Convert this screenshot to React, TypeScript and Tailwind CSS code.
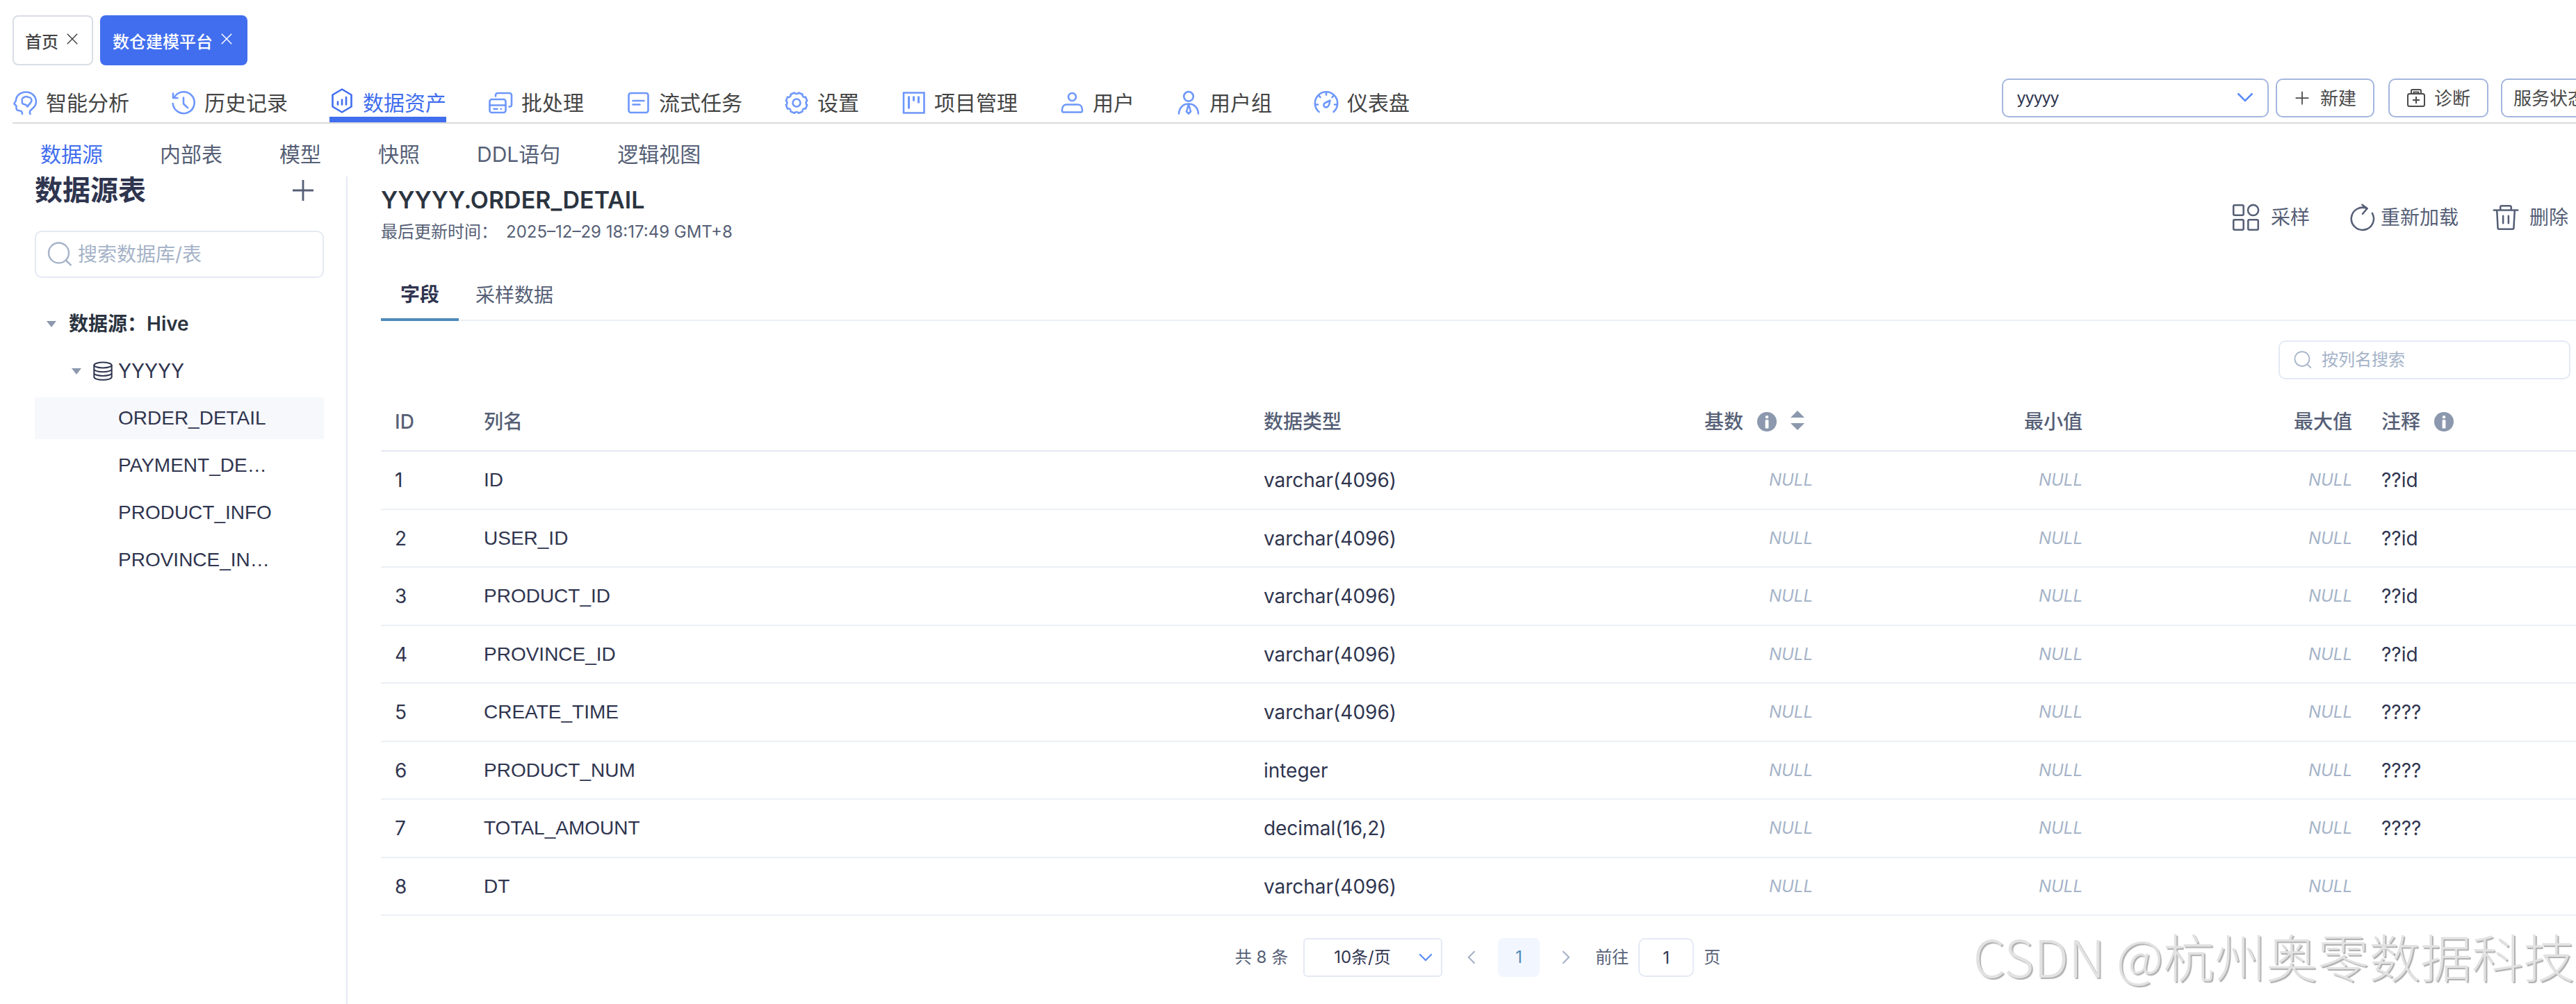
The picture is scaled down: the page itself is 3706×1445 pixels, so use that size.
import React, { useState } from "react";

type IconProps = { className?: string };

function Svg({ className = "", children }: React.PropsWithChildren<IconProps>) {
  return (
    <svg
      viewBox="0 0 36 36"
      fill="none"
      stroke="currentColor"
      strokeWidth="2.6"
      strokeLinecap="round"
      strokeLinejoin="round"
      aria-hidden="true"
      className={`shrink-0 ${className}`}
    >
      {children}
    </svg>
  );
}

const HeadIcon = () => (
  <Svg className="size-9">
    <path d="M14 34c0-3-1.500-4.800-4-4.800-3.500 0-4.500-1-4.500-4v-2.700L2.500 19.500c-.5-1.500 2.500-3 2.500-5.500C5.500 7.500 11.500 2.500 19.500 2.500 27.500 2.500 34 8.500 34 16.500c0 5-2.500 7.500-5.500 10-3 2.500-5 4-3 7.500" />
    <path d="M21.500 23.500c-1-2.500-2.500-3-4.500-3.300-3-.5-3.500-2-3-4 -1-2.500 0-5.200 2.500-6.200 2.500-1.500 5-1 6.500 0 2.500 0 4.500 2 4.500 4.500 0 3.500-3 4-6 9z" />
  </Svg>
);

const HistoryIcon = () => (
  <Svg className="size-9">
    <path d="M5 9.500A15.500 15.500 0 1 1 2.700 19" />
    <path d="M3 4.500v6.500h6.500" />
    <path d="M18 10.500v9l6 5.500" />
  </Svg>
);

const AssetIcon = () => (
  <Svg className="size-9">
    <path d="M18 1.500 31.500 9.500v17L18 34.500 4.500 26.500v-17z" />
    <path d="M12 19.500v4M18 16.500v7M24 13v10.500" />
  </Svg>
);

const BatchIcon = () => (
  <Svg className="size-9">
    <rect x="2.500" y="13" width="23" height="19" rx="3" />
    <path d="M2.500 21.500h23M8.500 26.700h5M18.800 26.700h.2M11 8.500V7a3 3 0 0 1 3-3h17a3 3 0 0 1 3 3v14a2.500 2.500 0 0 1-2.500 2.500h-1" />
  </Svg>
);

const TaskIcon = () => (
  <Svg className="size-9">
    <rect x="4.500" y="4" width="28" height="28" rx="3" />
    <path d="M10.500 15h16M10.500 20.500h10" />
  </Svg>
);

const GearIcon = () => (
  <Svg className="size-9">
    <path d="M15 3.500c.8 2 5.200 2 6 0l5.500 2.200c-.8 2.600 1.800 5 4.500 4l2.200 5.300c-2.200 1-2.200 5 0 6L31 26.500c-2.700-1-5.300 1.400-4.500 4L21 32.700c-.8-2-5.200-2-6 0l-5.500-2.200c.8-2.600-1.800-5-4.500-4L2.800 21c2.200-1 2.200-5 0-6L5 9.700c2.700 1 5.300-1.400 4.500-4z" />
    <circle cx="18" cy="18" r="5.500" />
  </Svg>
);

const BoardIcon = () => (
  <Svg className="size-9">
    <path strokeLinejoin="miter" d="M4 3.500h29.500v29H4z" />
    <path strokeWidth="3" strokeLinecap="butt" d="M11.500 8.500v18M18.500 8.500v7M25.500 8.500v10" />
  </Svg>
);

const UserIcon = () => (
  <Svg className="size-9">
    <circle cx="18.500" cy="9.500" r="5.500" />
    <path d="M4 29c0-5 2.500-8.500 6-8.500h17c3.500 0 6 3.500 6 8.500 0 2-.5 2.500-2 2.500H6c-1.500 0-2-.5-2-2.500z" />
  </Svg>
);

const GroupIcon = () => (
  <Svg className="size-9">
    <circle cx="18" cy="8.800" r="6.800" />
    <path d="M4 33.500C4.500 25 10 19.500 18 19.500S31.500 25 32 33.500M18 20l-3 10.500 3 3.200 3-3.200z" />
  </Svg>
);

const GaugeIcon = () => (
  <Svg className="size-9">
    <path d="M7.500 31C4 28 1.800 24 1.800 18.500a16.200 16.200 0 0 1 32.400 0c0 5.500-2.200 9.500-5.700 12.500" />
    <path d="M18 3v3.500M7.500 7.800l2 2.200M28.500 7.800l-2 2.200M2.500 20.500h3.500M33.500 20.500H30" />
    <path d="M23.500 14.500 22.300 20c-1 3.500-4 5.200-6.500 4-2-1.500-2-4.500.7-6z" />
  </Svg>
);

const CloseIcon = () => (
  <svg viewBox="0 0 16 16" className="size-4 shrink-0" stroke="currentColor" strokeWidth="1.500" aria-hidden="true">
    <path d="M.8.8l14.400 14.400M15.200.8.8 15.200" />
  </svg>
);

const PlusIcon = ({ className = "" }: IconProps) => (
  <svg viewBox="0 0 32 32" className={`shrink-0 ${className}`} stroke="currentColor" strokeWidth="2.800" aria-hidden="true">
    <path d="M16 1v30M1 16h30" />
  </svg>
);

const KitIcon = () => (
  <svg viewBox="0 0 28 28" className="size-7 shrink-0" fill="none" stroke="currentColor" strokeWidth="2" strokeLinejoin="round" aria-hidden="true">
    <rect x="2" y="8" width="24" height="18" rx="2.500" />
    <path d="M7 8V3.500A1.500 1.500 0 0 1 8.500 2h11A1.500 1.500 0 0 1 21 3.500V8M10.500 8V5.500h7V8M14 12v10M9 17h10" />
  </svg>
);

const SearchIcon = ({ className = "" }: IconProps) => (
  <svg viewBox="0 0 36 36" className={`shrink-0 ${className}`} fill="none" stroke="currentColor" strokeWidth="2.400" aria-hidden="true">
    <circle cx="16.500" cy="16" r="14.500" />
    <path d="M26.500 26.500l8 7.500" />
  </svg>
);

const ChevronIcon = ({ className = "" }: IconProps) => (
  <svg viewBox="0 0 24 14" fill="none" stroke="currentColor" strokeWidth="2.600" aria-hidden="true" className={`pointer-events-none shrink-0 ${className}`}>
    <path d="M1.500 1.500 12 12 22.500 1.500" />
  </svg>
);

const SampleIcon = () => (
  <Svg className="size-10">
    <rect x="2" y="2" width="13" height="13" rx="1.500" strokeWidth="2.300" />
    <circle cx="27.500" cy="8.500" r="6.800" strokeWidth="2.300" />
    <rect x="2" y="21" width="13" height="13" rx="1.500" strokeWidth="2.300" />
    <rect x="21" y="21" width="13" height="13" rx="1.500" strokeWidth="2.300" />
  </Svg>
);

const ReloadIcon = () => (
  <Svg className="size-10">
    <path strokeWidth="2.300" d="M30.500 12.500A14.500 14.500 0 1 1 24 6.500M17.500 1.500l6.500 4.800-6 7" />
  </Svg>
);

const TrashIcon = () => (
  <Svg className="size-10">
    <path strokeWidth="2.300" d="M2.500 8.500h31M11 8.500v-4A1.500 1.500 0 0 1 12.500 3h11A1.500 1.500 0 0 1 25 4.500v4M6.500 8.500l1.200 23A1.500 1.500 0 0 0 9.200 33h17.600a1.500 1.500 0 0 0 1.500-1.500l1.200-23M14.500 16v9.500M21.500 16v9.500" />
  </Svg>
);

const DatabaseIcon = () => (
  <svg viewBox="0 0 28 28" className="size-7 shrink-0" fill="none" stroke="currentColor" strokeWidth="2" aria-hidden="true">
    <ellipse cx="14" cy="5.500" rx="12.700" ry="4" />
    <path d="M1.300 5.500v17c0 2.500 5.700 4.300 12.700 4.300s12.700-1.800 12.700-4.300v-17M1.300 11.300c0 2.200 5.700 4 12.700 4s12.700-1.800 12.700-4M1.300 17c0 2.200 5.700 4 12.700 4s12.700-1.800 12.700-4" />
  </svg>
);

const CaretIcon = () => (
  <svg viewBox="0 0 14 9" className="w-3.5 shrink-0 text-[#8b98ad]" fill="currentColor" aria-hidden="true">
    <path d="M0 0h14L7 9z" />
  </svg>
);

const InfoIcon = () => (
  <svg viewBox="0 0 28 28" className="size-7 shrink-0" aria-hidden="true">
    <circle cx="14" cy="14" r="14" fill="#8b98ad" />
    <circle cx="14" cy="7.300" r="2.200" fill="#fff" />
    <rect x="11.600" y="11.300" width="4.800" height="12.300" rx=".6" fill="#fff" />
  </svg>
);

const SortIcon = () => (
  <svg viewBox="0 0 20 28" className="h-7 w-5 shrink-0" fill="#8b98ad" aria-hidden="true">
    <path d="M0 10 10 0l10 10zM0 18h20L10 28z" />
  </svg>
);

const navItems = [
  { label: "智能分析", Icon: HeadIcon },
  { label: "历史记录", Icon: HistoryIcon },
  { label: "数据资产", Icon: AssetIcon, active: true },
  { label: "批处理", Icon: BatchIcon },
  { label: "流式任务", Icon: TaskIcon },
  { label: "设置", Icon: GearIcon },
  { label: "项目管理", Icon: BoardIcon },
  { label: "用户", Icon: UserIcon },
  { label: "用户组", Icon: GroupIcon },
  { label: "仪表盘", Icon: GaugeIcon },
];

const subItems = ["数据源", "内部表", "模型", "快照", "DDL语句", "逻辑视图"];

const tables = ["ORDER_DETAIL", "PAYMENT_DE…", "PRODUCT_INFO", "PROVINCE_IN…"];

const columns = [
  { name: "ID", type: "varchar(4096)", note: "??id" },
  { name: "USER_ID", type: "varchar(4096)", note: "??id" },
  { name: "PRODUCT_ID", type: "varchar(4096)", note: "??id" },
  { name: "PROVINCE_ID", type: "varchar(4096)", note: "??id" },
  { name: "CREATE_TIME", type: "varchar(4096)", note: "????" },
  { name: "PRODUCT_NUM", type: "integer", note: "????" },
  { name: "TOTAL_AMOUNT", type: "decimal(16,2)", note: "????" },
  { name: "DT", type: "varchar(4096)", note: "" },
];

const outlineButton =
  "flex h-14 shrink-0 items-center rounded-[10px] border-2 border-[#a3b6de] bg-white text-[26px] text-[#4a4a4a]";

function TopTabs() {
  return (
    <div className="flex gap-2.5 pt-[22px] pl-[18px] text-[24px] leading-8">
      <div className="flex h-[72px] items-center gap-3 rounded-lg border-2 border-[#d9dde6] px-4 font-medium text-[#444]">
        <a href="#home" className="pt-1.5">首页</a>
        <button type="button" aria-label="关闭首页" className="mb-1 mr-1"><CloseIcon /></button>
      </div>
      <div className="flex h-[72px] items-center gap-3 rounded-lg bg-[#416eee] px-[18px] font-medium text-white">
        <a href="#platform" className="pt-1.5">数仓建模平台</a>
        <button type="button" aria-label="关闭数仓建模平台" className="mb-1 mr-1"><CloseIcon /></button>
      </div>
    </div>
  );
}

function MainNav() {
  return (
    <header className="ml-[18px] flex h-[84px] items-end border-b-2 border-[#d9dadb]">
      <nav className="flex shrink-0 gap-[60px]">
        {navItems.map(({ label, Icon, active }) => (
          <a
            key={label}
            href="#nav"
            aria-current={active ? "page" : undefined}
            className={
              active
                ? "flex h-12 items-center gap-3 border-b-8 border-[#416eee] text-[30px] leading-10 text-[#416eee]"
                : "flex h-12 items-center gap-3 border-b-8 border-transparent text-[30px] leading-10 text-[#444]"
            }
          >
            <span className={active ? "-mt-1.5 text-[#416eee]" : "text-[#6d97fa]"}><Icon /></span>
            {label}
          </a>
        ))}
      </nav>
      <div className="mb-[7px] -mr-8 ml-auto flex shrink-0 items-center">
        <div className="relative mr-2.5 w-96">
          <select
            aria-label="项目"
            defaultValue="yyyyy"
            className="h-14 w-full appearance-none rounded-[10px] border-2 border-[#a3b6de] bg-white pl-5 font-['Liberation_Sans','Noto_Sans_CJK_SC',sans-serif] text-[24px] text-[#2f354f]"
          >
            <option>yyyyy</option>
          </select>
          <ChevronIcon className="absolute top-5 right-[22px] w-6 text-[#5b8bf8]" />
        </div>
        <button type="button" className={`${outlineButton} mr-5 gap-4 pr-6 pl-[26px]`}>
          <PlusIcon className="size-5" />新建
        </button>
        <button type="button" className={`${outlineButton} mr-[18px] gap-3 px-6`}>
          <KitIcon />诊断
        </button>
        <button type="button" className={`${outlineButton} px-4`}>服务状态</button>
      </div>
    </header>
  );
}

function Sidebar() {
  return (
    <aside className="w-[500px] shrink-0 border-r-2 border-[#e4e9f2] pr-8 pl-[50px]">
      <div className="flex h-10 items-center justify-between pr-3.5">
        <h2 className="text-[40px] leading-10 font-bold text-[#2f354f]">数据源表</h2>
        <button type="button" aria-label="新增数据源" className="text-[#565f76]"><PlusIcon className="size-8" /></button>
      </div>
      <label className="mt-[38px] flex h-[68px] items-center gap-2 rounded-[10px] border-2 border-[#e4e9f2] pl-4 text-[#a5b3c8]">
        <SearchIcon className="size-9" />
        <input
          type="search"
          aria-label="搜索数据库/表"
          placeholder="搜索数据库/表"
          className="min-w-0 flex-1 bg-transparent text-[28px] leading-10 text-[#2f354f] outline-none placeholder:text-[#a5b3c8]"
        />
      </label>
      <ul className="mt-9 flex flex-col gap-2 text-[28px] leading-10 text-[#2f354f]">
        <li className="flex h-[60px] items-center gap-[18px] pl-[17px] font-semibold text-[#2b3440]">
          <CaretIcon />数据源：Hive
        </li>
        <li className="flex h-[60px] items-center pl-[53px]">
          <CaretIcon />
          <span className="mr-2 ml-[17px]"><DatabaseIcon /></span>
          YYYYY
        </li>
        {tables.map((name, index) => (
          <li key={name} className="font-['Liberation_Sans','Noto_Sans_CJK_SC',sans-serif]">
            <a
              href="#table"
              className={
                index === 0
                  ? "flex h-[60px] items-center bg-[#f7f8fb] pl-[120px]"
                  : "flex h-[60px] items-center pl-[120px]"
              }
            >
              {name}
            </a>
          </li>
        ))}
      </ul>
    </aside>
  );
}

function ColumnTable() {
  return (
    <table className="mt-5 w-full table-fixed border-collapse text-left text-[28px] leading-10 text-[#2f354f]">
      <colgroup>
        <col className="w-32" />
        <col />
        <col className="w-[14%]" />
        <col className="w-[388px]" />
        <col className="w-[388px]" />
        <col className="w-[388px]" />
        <col className="w-[302px]" />
      </colgroup>
      <thead className="text-[#565f76]">
        <tr className="h-[83px] border-b-2 border-[#e4e9f2]">
          <th className="px-5 font-medium">ID</th>
          <th className="px-5 font-medium">列名</th>
          <th className="px-5 font-medium">数据类型</th>
          <th className="px-5 font-medium">
            <span className="flex items-center justify-end gap-5 pr-3">
              基数
              <InfoIcon />
              <button type="button" aria-label="按基数排序" className="mb-1"><SortIcon /></button>
            </span>
          </th>
          <th className="px-5 text-right font-medium">最小值</th>
          <th className="px-5 text-right font-medium">最大值</th>
          <th className="px-[22px] font-medium">
            <span className="flex items-center gap-5">注释<InfoIcon /></span>
          </th>
        </tr>
      </thead>
      <tbody>
        {columns.map((column, index) => (
          <tr key={column.name} className="border-b-2 border-[#ebf0f6] odd:h-[84px] even:h-[83px]">
            <td className="px-5">{index + 1}</td>
            <td className="px-5 font-['Liberation_Sans','Noto_Sans_CJK_SC',sans-serif]">{column.name}</td>
            <td className="px-5">{column.type}</td>
            <td className="px-5 text-right text-[24px] text-[#a5b3c8] italic">NULL</td>
            <td className="px-5 text-right text-[24px] text-[#a5b3c8] italic">NULL</td>
            <td className="px-5 text-right text-[24px] text-[#a5b3c8] italic">NULL</td>
            <td className="px-[22px]">{column.note}</td>
          </tr>
        ))}
      </tbody>
    </table>
  );
}

function Pagination() {
  const [page, setPage] = useState("1");
  return (
    <div className="mt-8 flex items-center justify-center pr-0.5 text-[24px] leading-8 text-[#565f76]">
      <span className="mr-[22px]">共 8 条</span>
      <div className="relative mr-8 w-[200px]">
        <select
          aria-label="每页条数"
          className="h-14 w-full appearance-none rounded-md border-2 border-[#e4e9f4] bg-white pl-[42px] text-[24px] text-[#2f354f]"
        >
          <option>10条/页</option>
        </select>
        <ChevronIcon className="absolute top-[22px] right-3.5 w-5 text-[#5b8bf8]" />
      </div>
      <button type="button" aria-label="上一页" className="mr-7 text-[#a5b3c8]">
        <ChevronIcon className="w-5 rotate-90" />
      </button>
      <button type="button" aria-current="page" className="mr-7 h-14 w-[60px] rounded-lg bg-[#f2f6fe] text-[#4f8ab9]">1</button>
      <button type="button" aria-label="下一页" className="mr-8 text-[#a5b3c8]">
        <ChevronIcon className="w-5 -rotate-90" />
      </button>
      <label className="flex items-center gap-3.5">
        前往
        <input
          value={page}
          onChange={(event) => setPage(event.target.value)}
          className="h-14 w-20 rounded-[10px] border-2 border-[#e4e9f4] text-center text-[#2f354f]"
        />
        页
      </label>
    </div>
  );
}

function Detail() {
  return (
    <main className="min-w-0 flex-1 pt-3.5 pl-12">
      <div className="flex items-center justify-between pr-[11px]">
        <div>
          <h1 className="text-[34px] leading-10 font-semibold text-[#2b3440]">YYYYY.ORDER_DETAIL</h1>
          <p className="mt-2.5 text-[24px] leading-8 text-[#565f76]">
            最后更新时间：<span className="ml-3">2025–12–29 18:17:49 GMT+8</span>
          </p>
        </div>
        <div className="flex items-center pt-2 text-[28px] leading-10 text-[#565f76]">
          <button type="button" className="mr-14 flex items-center gap-4"><SampleIcon />采样</button>
          <button type="button" className="mr-12 flex items-center gap-1.5"><ReloadIcon />重新加载</button>
          <button type="button" className="flex items-center gap-3.5"><TrashIcon />删除</button>
        </div>
      </div>
      <div role="tablist" className="mt-9 flex h-[76px] border-b-2 border-[#ebf0f6] text-[28px] leading-10">
        <button type="button" role="tab" aria-selected="true" className="-mb-0.5 border-b-4 border-[#4f8ab9] px-7 pt-1 font-bold text-[#2f354f]">字段</button>
        <button type="button" role="tab" aria-selected="false" className="px-6 pt-1 text-[#565f76]">采样数据</button>
      </div>
      <div className="mt-7 flex justify-end pr-2">
        <label className="flex h-14 w-[420px] items-center gap-3.5 rounded-[10px] border-2 border-[#e4e9f4] pl-5 text-[#a5b3c8]">
          <SearchIcon className="size-[26px]" />
          <input
            type="search"
            aria-label="按列名搜索"
            placeholder="按列名搜索"
            className="min-w-0 flex-1 bg-transparent text-[24px] leading-8 text-[#2f354f] outline-none placeholder:text-[#a5b3c8]"
          />
        </label>
      </div>
      <ColumnTable />
      <Pagination />
    </main>
  );
}

export default function App() {
  return (
    <div className="relative flex min-h-screen flex-col overflow-hidden bg-white font-['Inter','Noto_Sans_CJK_SC',sans-serif]">
      <TopTabs />
      <MainNav />
      <nav className="flex h-[76px] items-center gap-[82px] pt-3 pl-[58px] text-[30px] leading-10 text-[#565f76]">
        {subItems.map((label, index) => (
          <a key={label} href="#section" className={index === 0 ? "text-[#416eee]" : ""}>{label}</a>
        ))}
      </nav>
      <div className="flex flex-1">
        <Sidebar />
        <Detail />
      </div>
      <div className="pointer-events-none absolute right-0.5 bottom-5 font-['Noto_Sans_CJK_SC',sans-serif] text-[74px] leading-[100px] font-light whitespace-nowrap text-[#e2e2e2] [text-shadow:2px_2px_1px_#b0b0b0]">
        CSDN @杭州奥零数据科技
      </div>
    </div>
  );
}
